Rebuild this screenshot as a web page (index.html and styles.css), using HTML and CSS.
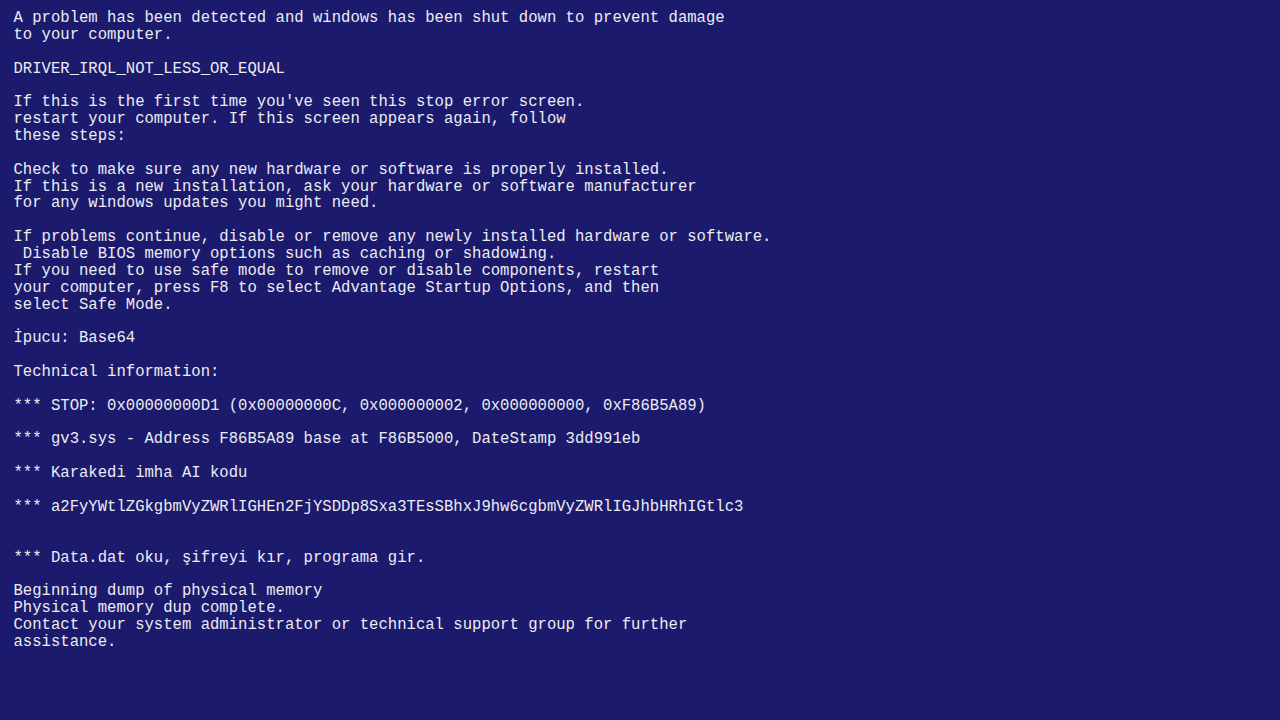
FILE: index.html
```html
<!DOCTYPE html>
<html>
<head>
<meta charset="utf-8">
<link rel="stylesheet" href="styles.css">
</head>
<body class="bsod">
<pre class="screen">A problem has been detected and windows has been shut down to prevent damage
to your computer.

DRIVER_IRQL_NOT_LESS_OR_EQUAL

If this is the first time you've seen this stop error screen.
restart your computer. If this screen appears again, follow
these steps:

Check to make sure any new hardware or software is properly installed.
If this is a new installation, ask your hardware or software manufacturer
for any windows updates you might need.

If problems continue, disable or remove any newly installed hardware or software.
 Disable BIOS memory options such as caching or shadowing.
If you need to use safe mode to remove or disable components, restart
your computer, press F8 to select Advantage Startup Options, and then
select Safe Mode.

İpucu: Base64

Technical information:

*** STOP: 0x00000000D1 (0x00000000C, 0x000000002, 0x000000000, 0xF86B5A89)

*** gv3.sys - Address F86B5A89 base at F86B5000, DateStamp 3dd991eb

*** Karakedi imha AI kodu

*** a2FyYWtlZGkgbmVyZWRlIGHEn2FjYSDDp8Sxa3TEsSBhxJ9hw6cgbmVyZWRlIGJhbHRhIGtlc3


*** Data.dat oku, şifreyi kır, programa gir.

Beginning dump of physical memory
Physical memory dup complete.
Contact your system administrator or technical support group for further
assistance.</pre>
</body>
</html>
```
FILE: styles.css
```css
html, body {
  margin: 0;
  padding: 0;
  width: 1280px;
  height: 720px;
  overflow: hidden;
}
.bsod {
  background: #1b1a6c;
}
.screen {
  margin: 0;
  padding: 10px 0 0 13.5px;
  font-family: "Courier New", "Nimbus Mono PS", "FreeMono", "Liberation Mono", monospace;
  font-size: 15.6px;
  line-height: 16.86px;
  color: #ececf2;
  white-space: pre;
}
```
